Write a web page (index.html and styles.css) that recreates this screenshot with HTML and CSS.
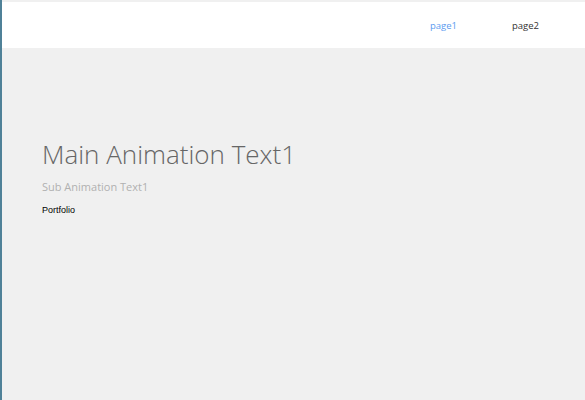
FILE: index.html
```html
<!DOCTYPE html>
<html>
<head>
<meta charset="utf-8">
<link rel="stylesheet" href="styles.css">
</head>
<body>
<div class="frame">
  <header class="topbar">
    <nav class="nav">
      <a class="nav-link active" href="#">page1</a>
      <a class="nav-link" href="#">page2</a>
    </nav>
  </header>
  <main class="hero">
    <h1 class="hero-title">Main Animation Text1</h1>
    <p class="hero-sub">Sub Animation Text1</p>
    <a class="hero-link" href="#">Portfolio</a>
  </main>
</div>
</body>
</html>
```
FILE: styles.css
```css
html, body {
  margin: 0;
  padding: 0;
  height: 100%;
}
body {
  background: #f0f0f0;
  border-left: 2px solid #4f8198;
  box-sizing: border-box;
  font-family: "Open Sans", sans-serif;
}
.frame {
  padding-top: 2px;
}
.topbar {
  height: 46px;
  background: #ffffff;
  display: flex;
  justify-content: flex-end;
  align-items: center;
}
.nav {
  display: flex;
  gap: 55px;
  padding-right: 46px;
}
.nav-link {
  font-size: 9.5px;
  text-decoration: none;
  color: #333333;
}
.nav-link.active {
  color: #5b9bf0;
}
.hero {
  padding: 88px 0 0 40px;
}
.hero-title {
  margin: 0;
  font-weight: 300;
  font-size: 26px;
  color: #666666;
  line-height: 36px;
}
.hero-sub {
  margin: 7px 0 0;
  font-size: 11px;
  color: #b0b0b0;
  line-height: 16px;
}
.hero-link {
  display: block;
  margin-top: 10px;
  font-family: "Liberation Sans", Arial, sans-serif;
  font-size: 9px;
  line-height: 10px;
  color: #000000;
  text-decoration: none;
}
```
